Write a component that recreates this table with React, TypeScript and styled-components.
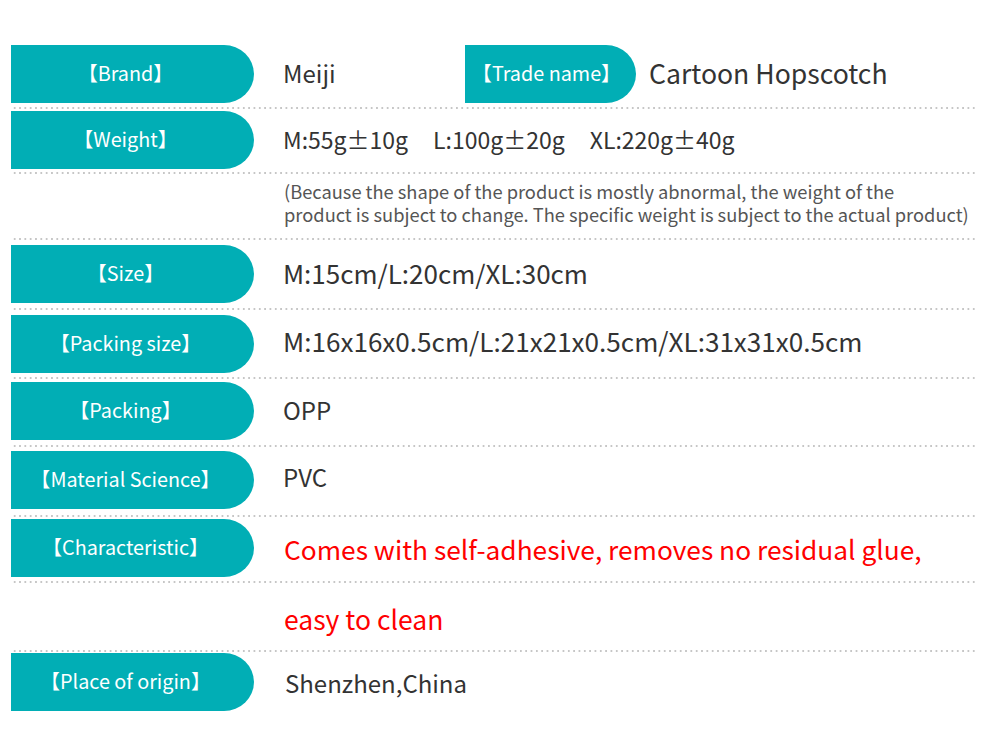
import React from "react";
import styled, { createGlobalStyle } from "styled-components";

const Global = createGlobalStyle`
  html, body { margin: 0; padding: 0; background: #ffffff; }
  body { font-family: "Noto Sans CJK SC", "Noto Sans", sans-serif; }
`;

const Page = styled.div`
  width: 1000px;
  height: 745px;
  background: #ffffff;
  overflow: hidden;
  display: flex;
  flex-direction: column;
`;

const Row = styled.div<{ $top: number; $bottom: number }>`
  display: flex;
  align-items: center;
  padding: ${(p) => p.$top}px 0 ${(p) => p.$bottom}px 11px;
`;

const Pill = styled.div<{ $w?: number; $pr?: number }>`
  width: ${(p) => p.$w ?? 243}px;
  height: 58px;
  flex: none;
  background: #01aeb5;
  border-radius: 0 30px 30px 0 / 0 29px 29px 0;
  color: #ffffff;
  font-size: 19.8px;
  display: flex;
  align-items: center;
  justify-content: center;
  box-sizing: border-box;
  padding-right: ${(p) => p.$pr ?? 14}px;
  padding-bottom: 4px;
  white-space: nowrap;
`;

const Value = styled.div<{ $size: number; $red?: boolean; $ml?: number; $dy?: number }>`
  margin-left: ${(p) => p.$ml ?? 29}px;
  font-size: ${(p) => p.$size}px;
  color: ${(p) => (p.$red ? "#ff0000" : "#333333")};
  white-space: nowrap;
  position: relative;
  top: ${(p) => p.$dy ?? -2}px;
`;

const Meiji = styled(Value)`
  width: 182px;
`;

const Gap = styled.span`
  display: inline-block;
  width: 25px;
`;

const Divider = styled.div`
  margin-left: 12px;
  width: 965px;
  height: 2px;
  flex: none;
  background-image: radial-gradient(circle, #c6c6c6 0.95px, transparent 1.15px);
  background-size: 5.33px 2px;
  background-repeat: repeat-x;
`;

const NoteRow = styled.div`
  height: 64px;
  padding-left: 284px;
  display: flex;
  flex-direction: column;
  justify-content: center;
  color: #555555;
  font-size: 18.3px;
  line-height: 23px;
  box-sizing: border-box;
  padding-bottom: 6px;
  white-space: nowrap;
`;

const TextRow = styled.div`
  height: 67px;
  padding-left: 284px;
  display: flex;
  align-items: center;
  box-sizing: border-box;
  padding-top: 3px;
`;

const RedText = styled.div`
  font-size: 26.5px;
  color: #ff0000;
  white-space: nowrap;
`;

export default function App() {
  return (
    <Page>
      <Global />
      <Row $top={45} $bottom={4}>
        <Pill>【Brand】</Pill>
        <Meiji $size={24}>Meiji</Meiji>
        <Pill $w={171} $pr={8}>【Trade name】</Pill>
        <Value $size={26.6} $ml={13}>Cartoon Hopscotch</Value>
      </Row>
      <Divider />
      <Row $top={2} $bottom={3}>
        <Pill>【Weight】</Pill>
        <Value $size={23} $dy={-1}>
          M:55g±10g<Gap />L:100g±20g<Gap />XL:220g±40g
        </Value>
      </Row>
      <Divider />
      <NoteRow>
        <span>(Because the shape of the product is mostly abnormal, the weight of the</span>
        <span>product is subject to change. The specific weight is subject to the actual product)</span>
      </NoteRow>
      <Divider />
      <Row $top={5} $bottom={5}>
        <Pill>【Size】</Pill>
        <Value $size={26}>M:15cm/L:20cm/XL:30cm</Value>
      </Row>
      <Divider />
      <Row $top={5} $bottom={4}>
        <Pill>【Packing size】</Pill>
        <Value $size={26.1} $dy={-3}>M:16x16x0.5cm/L:21x21x0.5cm/XL:31x31x0.5cm</Value>
      </Row>
      <Divider />
      <Row $top={3} $bottom={5}>
        <Pill>【Packing】</Pill>
        <Value $size={24}>OPP</Value>
      </Row>
      <Divider />
      <Row $top={4} $bottom={6}>
        <Pill>【Material Science】</Pill>
        <Value $size={24} $dy={-4}>PVC</Value>
      </Row>
      <Divider />
      <Row $top={2} $bottom={4}>
        <Pill>【Characteristic】</Pill>
        <Value $size={26.3} $red $ml={30} $dy={0}>
          Comes with self-adhesive, removes no residual glue,
        </Value>
      </Row>
      <Divider />
      <TextRow>
        <RedText>easy to clean</RedText>
      </TextRow>
      <Divider />
      <Row $top={1} $bottom={4}>
        <Pill>【Place of origin】</Pill>
        <Value $size={24} $ml={31} $dy={0}>Shenzhen,China</Value>
      </Row>
    </Page>
  );
}
